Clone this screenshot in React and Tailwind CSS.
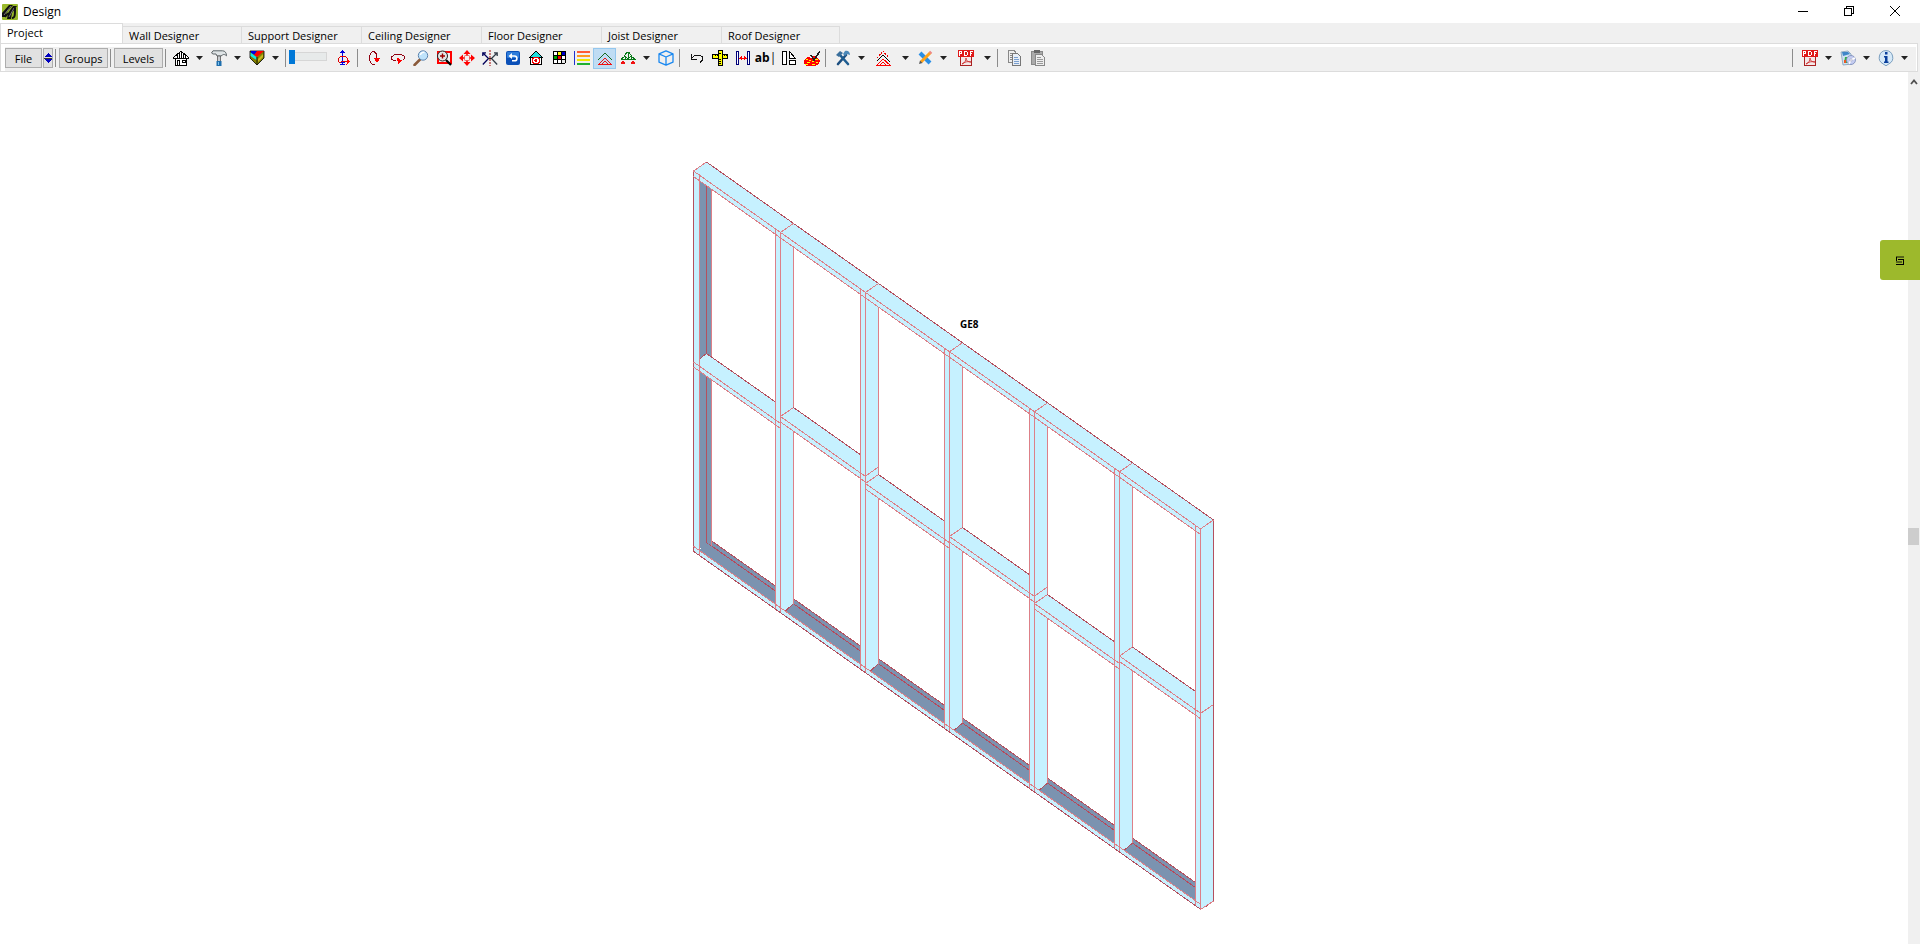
const TABS = [
    { name: 'Wall Designer', width: 'w-[119px]' },
    { name: 'Support Designer', width: 'w-[120px]' },
    { name: 'Ceiling Designer', width: 'w-[120px]' },
    { name: 'Floor Designer', width: 'w-[120px]' },
    { name: 'Joist Designer', width: 'w-[120px]' },
    { name: 'Roof Designer', width: 'w-[118px]' },
];

const Icon = ({ children, smooth }) => (
    <svg
        viewBox="0 0 16 16"
        className="w-4 h-4 shrink-0"
        fill="none"
        shapeRendering={smooth ? 'auto' : 'crispEdges'}
        aria-hidden="true"
    >
        {children}
    </svg>
);

const Logo = () => (
    <Icon smooth>
        <rect width="16" height="16" rx="1" fill="#9ab92c" />
        <path d="M0 13V9l7-8h4L4 9v4zM5 15l1-6 5-7h4l-5 7-1 6z" fill="#111" />
        <path d="M2 11l7-9M7 13l5-9" stroke="#777" />
        <path d="M10 14c3 0 3-3 3-10M3 13l3-4" stroke="#111" strokeWidth="2" />
    </Icon>
);

const HouseIcon = () => (
    <Icon>
        <path d="M3 7v8h11V7" fill="#fff" />
        <path d="M8 1l6 6H2z" fill="#fff" />
        <path d="M.5 7.500l7-6h1l7 6v1h-15zM2.500 8v7.500h11V8" stroke="#000" />
        <path d="M4.500 5v3M6.500 3v5M8.500 2v6M10.500 3v5M12.500 5v3" stroke="#000" />
        <path d="M4.500 15v-5h2v5M9.500 10.500h3v2h-3z" stroke="#000" />
    </Icon>
);

const HammerIcon = () => (
    <Icon smooth>
        <path d="M.5 3L2 .8h9.500c2.500 0 4 2 4 5C14 4.500 12.500 4 11.500 5L10 6H6L5 4H2z" fill="#dfe4e6" stroke="#5c6468" />
        <path d="M6.500 6h3v6h-3z" fill="#c8ccd0" stroke="#555" strokeWidth=".8" />
        <path d="M5.500 11h5v5h-5z" fill="#1e6fae" />
        <path d="M7 12h1v3H7z" fill="#7fc0ea" />
    </Icon>
);

const CubeIcon = () => (
    <Icon smooth>
        <path d="M1 1h14v7l-7 7-7-7z" fill="#808000" stroke="#000" strokeWidth=".8" />
        <path d="M2 1h6L6 5 2 3z" fill="#0000e0" />
        <path d="M8 1h7L8 7 5 5z" fill="#f00" />
        <path d="M1.500 2.500L7.500 7v3l-6-4z" fill="#10e8e8" />
        <path d="M14 4v3l-5 5V9z" fill="#c8b820" />
        <path d="M8 7v8" stroke="#000" strokeWidth=".8" />
    </Icon>
);

const OrbitIcon = () => (
    <Icon>
        <path d="M6.500 2v13M4 14.500h5M4 12.500h5" stroke="#0000e0" />
        <path d="M6.500 0L9 3H4z" fill="#0000e0" />
        <path d="M11.500 9.500V8.500L9.500 6.500h-5l-2 2v3l2 1.500" stroke="#e00000" />
        <path d="M5 11.500h7" stroke="#e00000" />
        <path d="M10.500 8.500l4 3-4 3z" fill="#f00" />
    </Icon>
);

const RotateVIcon = () => (
    <Icon>
        <path d="M9.500 8V4.500l-1-2-2-1h-1l-2 2-1 3v3l1 3 2 2h2" stroke="#900010" />
        <path d="M6.500 8h7L10 12.500z" fill="#f00" />
    </Icon>
);

const RotateHIcon = () => (
    <Icon>
        <path d="M6 10.500H4l-2.500-1.500V7l3-2.500h7L14.500 6.500V8.500l-2 2" stroke="#900010" />
        <path d="M7 7.500l5 3-4 4z" fill="#f00" />
    </Icon>
);

const MagnifierIcon = () => (
    <Icon smooth>
        <path d="M1.500 15L7 9.500" stroke="#8a5a3a" strokeWidth="2.500" strokeLinecap="round" />
        <circle cx="10" cy="5.500" r="4.700" fill="#bfe3fb" stroke="#5d83ad" />
        <path d="M7.500 5c0-2 2-3 4-2.500" stroke="#fff" strokeWidth="1.500" />
    </Icon>
);

const ZoomWindowIcon = () => (
    <Icon smooth>
        <rect x="2" y="2" width="13" height="11" stroke="#f00" strokeWidth="2" />
        <path d="M10 10l5 5" stroke="#000" strokeWidth="2.200" />
        <circle cx="6.500" cy="6" r="5" fill="#e4e4e4" stroke="#222" />
        <path d="M6.500 3.500v5M4 6h5" stroke="#900" strokeWidth="1.400" />
    </Icon>
);

const MoveIcon = () => (
    <Icon smooth>
        <path d="M8 0l3.500 4h-7zM8 16l3.500-4h-7zM0 8l4-3.500v7zM16 8l-4-3.500v7z" fill="#f00" />
        <path d="M8 3v10M3 8h10" stroke="#f00" strokeWidth="1.600" />
        <rect x="5.500" y="5.500" width="5" height="5" rx="1" fill="#f6f0f0" stroke="#e55" />
    </Icon>
);

const MirrorIcon = () => (
    <Icon smooth>
        <path d="M8 0v16" stroke="#a00000" strokeDasharray="2 1" />
        <path d="M1 3l5.500 5.500L.8 14.500M.8 6V2.800H4" stroke="#00005a" strokeWidth="1.300" />
        <path d="M15 3L9.500 8.500l5.700 6M15.200 6V2.800H12" stroke="#333c48" strokeWidth="1.300" />
        <path d="M6 8.500h4" stroke="#222" />
    </Icon>
);

const BackIcon = () => (
    <Icon smooth>
        <rect x="1" y="1" width="14" height="14" rx="2" fill="#0b50b8" />
        <rect x="2" y="2" width="12" height="6" rx="1" fill="#2f7ddb" />
        <path d="M5 6h4.500a2.300 2.300 0 010 4.800H7" stroke="#fff" strokeWidth="1.600" />
        <path d="M7 3L3.500 6 7 9z" fill="#fff" />
    </Icon>
);

const HomeTargetIcon = () => (
    <Icon>
        <path d="M2.500 8v6.500h11V8" fill="#fff" stroke="#000" />
        <path d="M7.500 1.500h1L14.500 7.500h-13z" fill="#20e0e0" stroke="#000" />
        <circle cx="8" cy="10.500" r="3.500" fill="#fff" stroke="#e00" />
        <circle cx="8" cy="10.500" r="1.500" fill="#e00" />
    </Icon>
);

const PaletteIcon = () => (
    <Icon>
        <path d="M2 1h13v12l-2 1H2z" fill="#000" />
        <path d="M3 2h3v3H3zM3 10h3v3H3z" fill="#fff" />
        <path d="M7 2h3v3H7z" fill="#ff0" />
        <path d="M11 2h3v3h-3z" fill="#00c" />
        <path d="M3 6h3v3H3z" fill="#0a0" />
        <path d="M7 6h3v3H7z" fill="#f00" />
        <path d="M11 6h3v3h-3zM7 10h3v3H7z" fill="#fff" />
        <path d="M11 10h3v3h-3z" fill="#e8e8e8" />
    </Icon>
);

const LayersIcon = () => (
    <Icon>
        <path d="M.5 1v14" stroke="#2030d0" />
        <path d="M3 2h13" stroke="#ff5a36" strokeWidth="2" />
        <path d="M3 6h13" stroke="#ff9a20" strokeWidth="2" />
        <path d="M3 10h13" stroke="#f0e800" strokeWidth="2" />
        <path d="M3 14h13" stroke="#20b030" strokeWidth="2" />
    </Icon>
);

const GableIcon = () => (
    <Icon>
        <path d="M1 10l7-7 7 7" stroke="#186a20" />
        <path d="M1.500 14.500L8 8l6.500 6.500zM5 14l3-3 3 3" stroke="#f01010" />
    </Icon>
);

const TrussIcon = () => (
    <Icon>
        <path d="M.5 9.500h15M1 9l3-2 3-5h2l3 5 3 2M5 6l3 3 3-3M5 6v3M11 6v3M8 2v7" stroke="#087a18" />
        <path d="M3 10l2.500 4H.5zM13 10l2.500 4h-5z" fill="#f01010" />
    </Icon>
);

const BoxIcon = () => (
    <Icon smooth>
        <path d="M8 .8l7 3v8.400l-7 3-7-3V3.800zM1 3.800L8 7l7-3.200M8 7v8" stroke="#1a88f0" strokeWidth="1.300" strokeLinejoin="round" />
    </Icon>
);

const UndoIcon = () => (
    <Icon>
        <path d="M2.500 4v5h5M3 8l3-3h5l2.500 2v3L11 12.500" stroke="#111" />
    </Icon>
);

const RulerIcon = () => (
    <Icon>
        <rect x=".5" y="4.500" width="15" height="4" fill="#ff0" stroke="#000" />
        <rect x="6.500" y=".5" width="4" height="15" fill="#ff0" stroke="#000" />
        <path d="M3.500 4v2M5.500 4v2M12.500 4v2M14.500 4v2M7 3.500h2M7 11.500h2M7 13.500h2M7 9.500h2" stroke="#000" />
    </Icon>
);

const SpanIcon = () => (
    <Icon>
        <path d="M1.500 1.500h2v13h-2zM12.500 1.500h2v13h-2z" fill="#fff" stroke="#00007a" />
        <path d="M4 8h8" stroke="#f00" />
        <path d="M4 8l3-2.500v5zM12 8L9 5.500v5z" fill="#f00" />
    </Icon>
);

const ShapesIcon = () => (
    <Icon>
        <path d="M1.500 1.500h4v13h-4z" stroke="#000" fill="#fff" />
        <path d="M8.500 1.500v7h6zM8.500 10.500h6v4h-6z" stroke="#000" fill="#fff" />
    </Icon>
);

const PaintIcon = () => (
    <Icon>
        <path d="M0 10l4-3 3 1 3-2 4 2 2 3-2 4-5 1H2l-2-3z" fill="#f00" />
        <path d="M2 9h2v1H2zM5 10h2v1H5zM3 12h3v1H3zM8 11h2v1H8zM8 14h3v1H8zM11 9h3v1h-3zM12 12h2v1h-2zM1 14h3v1H1z" fill="#ff0" />
        <path d="M7 5l3 5 6-9" stroke="#222" strokeWidth="1.500" />
    </Icon>
);

const ToolsIcon = () => (
    <Icon smooth>
        <path d="M3 14L11 5" stroke="#1d4f80" strokeWidth="2.600" strokeLinecap="round" />
        <path d="M10 1c3-1 5 1 5 4l-3-1-2 2-2-2z" fill="#4b88b8" />
        <path d="M5 5l8 9" stroke="#1d5c90" strokeWidth="2.600" strokeLinecap="round" />
        <path d="M1 5l4-4 3 2-4 4z" fill="#3a6f9c" />
    </Icon>
);

const RoofStackIcon = () => (
    <Icon>
        <path d="M1 8l6-7 6 7" stroke="#e00" strokeDasharray="2 1" />
        <path d="M1 11l6-6 7 7" stroke="#000" />
        <path d="M1 15l6-6 7 6zM4 15l3-3 3 3" stroke="#f00" />
    </Icon>
);

const PencilIcon = () => (
    <Icon smooth>
        <path d="M3 3l10 10" stroke="#2a8fe6" strokeWidth="4" />
        <path d="M13.500 2.500L4 12" stroke="#ffa31a" strokeWidth="3" />
        <path d="M2 14l1-3.500L5.500 13z" fill="#555" />
        <path d="M12.500 1.500l2 2" stroke="#e88" strokeWidth="2" />
    </Icon>
);

const PdfIcon = () => (
    <Icon>
        <path d="M2.500 5.500h11v10h-11z" fill="#f4e8e8" stroke="#a22" />
        <path d="M0 0h16v7H0z" fill="#e01818" />
        <path d="M1.500 6V1.500h2v2h-2M6.500 1.500h2l1 1v2l-1 1h-2zM12.500 6V1.500h2.500M12 3.500h2" stroke="#fff" />
        <path d="M4 14c3-1 4-4 4-6 0 3 2 4 5 4-4-1-6 0-9 2z" stroke="#c22" strokeWidth=".8" shapeRendering="auto" />
    </Icon>
);

const CopyIcon = () => (
    <Icon>
        <path d="M1.500.5h6l1 2v10h-7z" fill="#eee" stroke="#888" />
        <path d="M3 3.500h4M3 5.500h2M3 7.500h2M3 9.500h2" stroke="#888" />
        <path d="M5.500 3.500h5l3 3v9h-8z" fill="#e8eef6" stroke="#777" />
        <path d="M7 7.500h4M7 9.500h5M7 11.500h5M7 13.500h5" stroke="#7aa0d0" />
    </Icon>
);

const PasteIcon = () => (
    <Icon>
        <path d="M1.500 1.500h11v13h-11z" fill="#aaa" stroke="#888" />
        <path d="M4 0h6v3H4z" fill="#666" />
        <path d="M5.500 4.500h6l3 3v8h-9z" fill="#eee" stroke="#888" />
        <path d="M7 7.500h4M7 9.500h6M7 11.500h6M7 13.500h6" stroke="#999" />
    </Icon>
);

const MediaIcon = () => (
    <Icon smooth>
        <path d="M1 2l7-1 3 3 1 10-9 1z" fill="#cfe2f2" stroke="#7f9cb8" strokeWidth=".8" />
        <path d="M2 2h6l2 2-7 2z" fill="#3f86c8" />
        <path d="M5 7h2v6H4z" fill="#35b04a" />
        <path d="M4 10h2v3H4z" fill="#ea5a20" />
        <circle cx="11" cy="10" r="4.500" fill="#c4ccf0" stroke="#7a8ab8" strokeWidth=".8" />
        <path d="M11 10l4-2M11 10l-2 4" stroke="#fff" strokeWidth="1.500" />
        <circle cx="11" cy="10" r="1.200" fill="#fff" stroke="#88a" strokeWidth=".5" />
    </Icon>
);

const InfoIcon = () => (
    <Icon smooth>
        <path d="M8 .6a7 7 0 013 13.200L8 15.800 5 13.800A7 7 0 018 .6z" fill="#d6e9f8" stroke="#6d94b8" strokeWidth=".9" />
        <path d="M7 2h2.500v2.500H7zM6 6h3.500v5.500h1V13H6v-1.500h1V7.500H6z" fill="#0a3f9c" />
    </Icon>
);

const ToolButton = ({ label, active, wide, children }) => (
    <button
        type="button"
        aria-label={label}
        className={`h-[21px] shrink-0 flex items-center justify-center ${wide ? 'w-[29px]' : 'w-[23px]'} ${active ? 'bg-[#bfdcf3] outline outline-[#94c7ee] -outline-offset-1' : ''}`}
    >
        {children}
    </button>
);

const DropArrow = ({ label }) => (
    <button type="button" aria-label={`${label} options`} className="w-[15px] h-[21px] shrink-0 flex items-center justify-center">
        <svg viewBox="0 0 7 4" className="w-[7px] h-1" aria-hidden="true">
            <path d="M0 0h7L3.500 4z" fill="#222" />
        </svg>
    </button>
);

const TextButton = ({ children, className }) => (
    <button
        type="button"
        className={`h-5 shrink-0 border border-[#adadad] bg-[#e1e1e1] pt-px text-center ${className}`}
    >
        {children}
    </button>
);

const Separator = ({ tight }) => (
    <div className={`w-px h-[18px] shrink-0 bg-[#8c8c8c] ml-0.5 ${tight ? 'mr-[3px]' : 'mr-[5px]'}`} />
);

const Toolbar = () => (
    <div className="flex items-center bg-[#f0f0f0] h-6 pb-0.5 pr-1">
        <TextButton className="w-[37px]">File</TextButton>
        <button type="button" aria-label="Scroll files" className="ml-px w-2.5 h-5 shrink-0 border border-[#adadad] bg-[#e1e1e1] flex items-center justify-center">
            <svg viewBox="0 0 8 10" className="w-2 h-2.5 shrink-0" shapeRendering="crispEdges" aria-hidden="true">
                <path d="M4 0l4 4H0zM4 10l4-4H0z" fill="#0000c0" />
                <path d="M0 5h8" stroke="#333" />
            </svg>
        </button>
        <Separator tight />
        <TextButton className="w-[49px]">Groups</TextButton>
        <Separator tight />
        <TextButton className="w-[49px]">Levels</TextButton>
        <Separator tight />
        <ToolButton label="Building"><HouseIcon /></ToolButton>
        <DropArrow label="Building" />
        <ToolButton label="Build"><HammerIcon /></ToolButton>
        <DropArrow label="Build" />
        <ToolButton label="Solid view"><CubeIcon /></ToolButton>
        <DropArrow label="Solid view" />
        <Separator tight />
        <input
            type="range"
            aria-label="Transparency"
            defaultValue={0}
            className="appearance-none w-[38px] h-[14px] shrink-0 mb-1 mr-[5px] bg-transparent [&::-webkit-slider-runnable-track]:h-[9px] [&::-webkit-slider-runnable-track]:border [&::-webkit-slider-runnable-track]:border-[#d6d6d6] [&::-webkit-slider-runnable-track]:bg-[#e7eaea] [&::-webkit-slider-thumb]:appearance-none [&::-webkit-slider-thumb]:w-1.5 [&::-webkit-slider-thumb]:h-[14px] [&::-webkit-slider-thumb]:-mt-[3px] [&::-webkit-slider-thumb]:-ml-px [&::-webkit-slider-thumb]:bg-[#0078d7]"
        />
        <ToolButton label="Orbit"><OrbitIcon /></ToolButton>
        <Separator />
        <ToolButton label="Rotate vertical"><RotateVIcon /></ToolButton>
        <ToolButton label="Rotate horizontal"><RotateHIcon /></ToolButton>
        <ToolButton label="Zoom"><MagnifierIcon /></ToolButton>
        <ToolButton label="Zoom window"><ZoomWindowIcon /></ToolButton>
        <ToolButton label="Pan"><MoveIcon /></ToolButton>
        <ToolButton label="Mirror"><MirrorIcon /></ToolButton>
        <ToolButton label="Previous view"><BackIcon /></ToolButton>
        <ToolButton label="Home view"><HomeTargetIcon /></ToolButton>
        <ToolButton label="Colours"><PaletteIcon /></ToolButton>
        <ToolButton label="Layers"><LayersIcon /></ToolButton>
        <ToolButton label="Frames" active><GableIcon /></ToolButton>
        <ToolButton label="Trusses"><TrussIcon /></ToolButton>
        <DropArrow label="Trusses" />
        <ToolButton label="3D view"><BoxIcon /></ToolButton>
        <Separator />
        <ToolButton label="Undo"><UndoIcon /></ToolButton>
        <ToolButton label="Measure"><RulerIcon /></ToolButton>
        <ToolButton label="Dimension"><SpanIcon /></ToolButton>
        <button type="button" className="w-[23px] h-[21px] shrink-0 text-[12px] font-bold whitespace-nowrap">
            ab<span className="font-normal">|</span>
        </button>
        <ToolButton label="Shapes"><ShapesIcon /></ToolButton>
        <ToolButton label="Paint"><PaintIcon /></ToolButton>
        <Separator />
        <ToolButton label="Tools"><ToolsIcon /></ToolButton>
        <DropArrow label="Tools" />
        <ToolButton label="Roof" wide><RoofStackIcon /></ToolButton>
        <DropArrow label="Roof" />
        <ToolButton label="Edit"><PencilIcon /></ToolButton>
        <DropArrow label="Edit" />
        <ToolButton label="Export PDF" wide><PdfIcon /></ToolButton>
        <DropArrow label="Export PDF" />
        <Separator />
        <ToolButton label="Copy"><CopyIcon /></ToolButton>
        <ToolButton label="Paste"><PasteIcon /></ToolButton>

        <div className="flex items-center ml-auto">
            <Separator />
            <ToolButton label="PDF"><PdfIcon /></ToolButton>
            <DropArrow label="PDF" />
            <ToolButton label="Media"><MediaIcon /></ToolButton>
            <DropArrow label="Media" />
            <ToolButton label="Info"><InfoIcon /></ToolButton>
            <DropArrow label="Info" />
        </div>
    </div>
);

// Frame geometry: every long member falls by SLOPE, depth goes up and right
const SLOPE = 0.706;
const DX = 13;
const DY = -9;
const T = 5;
const LEFT = 693.5;
const RIGHT = 1200.5;
const STUDS = [775.5, 860.5, 944.5, 1029.5, 1114.5, 1195.5];
const NOGS = [
    { x: 780.5, y: 416.5, end: 860.5 },
    { x: 865.5, y: 483.5, end: 944.5, step: true },
    { x: 949.5, y: 536.5, end: 1029.5 },
    { x: 1034.5, y: 603.5, end: 1114.5, step: true },
    { x: 1119.5, y: 656, end: 1195.5 },
];
const FILL = '#c6f1ff';
const SHADE = '#7b93b0';

const topY = (x) => 171 + SLOPE * (x - LEFT);
const baseY = (x) => 546.3 + SLOPE * (x - LEFT);
const pts = (list) => list.map((p) => p.join(',')).join(' ');

const Line = ({ from, to, dark }) => (
    <line x1={from[0]} y1={from[1]} x2={to[0]} y2={to[1]} stroke={dark ? '#b4505f' : '#dd8088'} />
);

const Nog = ({ x, y, end, step }) => {
    const at = (px) => y + SLOPE * (px - x);
    const backEnd = y + DY + SLOPE * (end - x - DX);
    return (
        <g>
            <polygon
                points={pts([[x, y], [x + DX, y + DY], [end, backEnd], [end, at(end) + T + 1], [x, y + T + 1]])}
                fill={FILL}
            />
            <Line from={[x, y]} to={[x + DX, y + DY]} />
            {step && <Line from={[x, y - 7.5]} to={[x + DX, y - 7.5 + DY]} />}
            <Line from={[x + DX, y + DY]} to={[end, backEnd]} dark />
            <Line from={[x, y]} to={[end + T, at(end + T)]} />
            <Line from={[x, y + T + 0.5]} to={[end + T, at(end + T) + T + 0.5]} />
        </g>
    );
};

const StudEdges = ({ x }) => (
    <g>
        <Line from={[x, topY(x)]} to={[x, baseY(x) + T]} />
        <Line from={[x + T, topY(x + T)]} to={[x + T, baseY(x + T) + T]} />
    </g>
);

const Stud = ({ x }) => {
    const f = x + T;
    const b = f + DX;
    return (
        <g>
            <polygon
                points={pts([[x, topY(x)], [f, topY(f)], [b, topY(b)], [b, baseY(f) - 4], [f + 5, baseY(f) + 3], [f, baseY(f) + T], [x, baseY(x) + T]])}
                fill={FILL}
            />
            <Line from={[b, topY(b)]} to={[b, baseY(f) - 4]} />
            <Line from={[b, baseY(f) - 4]} to={[f + 5, baseY(f) + 3]} dark />
        </g>
    );
};

const FrameDrawing = () => {
    const inner = LEFT + 6;
    const side = inner + DX - 1;
    const end = RIGHT + DX;
    const nogY = (x) => 362 + SLOPE * (x - LEFT);
    const backBase = (x) => baseY(x) + DY - SLOPE * DX;
    return (
        <svg viewBox="0 72 1908 872" className="block w-full h-full" shapeRendering="crispEdges" role="img" aria-label="GE8">
            {/* Bottom plate */}
            <polygon
                points={pts([[inner, baseY(inner)], [706.5, backBase(706.5)], [RIGHT, backBase(RIGHT)], [RIGHT, baseY(RIGHT)]])}
                fill={SHADE}
            />
            <Line from={[706.5, backBase(706.5)]} to={[RIGHT, backBase(RIGHT)]} dark />
            <line x1="706.5" y1={backBase(706.5) + T} x2={RIGHT} y2={backBase(RIGHT) + T} stroke="#b8485a" />
            <polygon
                points={pts([[LEFT, baseY(LEFT)], [RIGHT, baseY(RIGHT)], [RIGHT, baseY(RIGHT) + T], [LEFT, baseY(LEFT) + T]])}
                fill={FILL}
            />

            {/* Left stud */}
            <polygon
                points={pts([[inner, topY(inner)], [side, topY(side)], [side, backBase(side) + T], [706.5, backBase(706.5) + T], [inner, baseY(inner) - 2]])}
                fill={SHADE}
            />
            <Line from={[706.5, topY(706.5)]} to={[706.5, backBase(706.5) + T]} dark />
            <Line from={[side, topY(side)]} to={[side, backBase(side) + T]} />
            <polygon points={pts([[LEFT, topY(LEFT)], [inner, topY(inner)], [inner, baseY(inner) + T], [LEFT, baseY(LEFT) + T]])} fill={FILL} />

            {/* First nog meets the left stud front face */}
            <polygon
                points={pts([[LEFT, nogY(LEFT)], [inner, 359], [706.5, 353.5], [775.5, 402], [775.5, nogY(775.5) + T], [LEFT, nogY(LEFT) + T]])}
                fill={FILL}
            />
            <Line from={[inner, 359]} to={[706.5, 353.5]} dark />
            <Line from={[706.5, 353.5]} to={[775.5, 402]} dark />
            <Line from={[LEFT, topY(LEFT)]} to={[LEFT, baseY(LEFT) + T]} dark />
            <Line from={[inner, topY(inner)]} to={[inner, baseY(inner) + T]} />

            {STUDS.map((x) => <Stud key={x} x={x} />)}
            <Line from={[LEFT, nogY(LEFT)]} to={[780.5, nogY(780.5)]} />
            <Line from={[LEFT, nogY(LEFT) + T]} to={[780.5, nogY(780.5) + T]} />
            {NOGS.map((nog) => <Nog key={nog.x} {...nog} />)}
            {STUDS.map((x) => <StudEdges key={x} x={x} />)}
            <Line from={[LEFT, baseY(LEFT)]} to={[RIGHT, baseY(RIGHT)]} />
            <Line from={[LEFT, baseY(LEFT) + T]} to={[RIGHT, baseY(RIGHT) + T]} dark />

            {/* Right end face */}
            <polygon
                points={pts([[RIGHT, topY(RIGHT)], [end, topY(RIGHT) + DY], [end, 901], [RIGHT, 909]])}
                fill={FILL}
            />
            <Line from={[RIGHT, topY(RIGHT)]} to={[RIGHT, 909.5]} />
            <Line from={[end, topY(RIGHT) + DY]} to={[end, 901]} dark />
            <Line from={[RIGHT, 909.5]} to={[end, 901]} />
            <Line from={[RIGHT, 713.5]} to={[end, 704.5]} />

            {/* Top plate */}
            <polygon
                points={pts([[LEFT, topY(LEFT)], [LEFT + DX, topY(LEFT) + DY], [end, topY(RIGHT) + DY], [RIGHT, topY(RIGHT)], [RIGHT, topY(RIGHT) + T], [LEFT, topY(LEFT) + T]])}
                fill={FILL}
            />
            <Line from={[LEFT, topY(LEFT)]} to={[LEFT + DX, topY(LEFT) + DY]} />
            <Line from={[LEFT + DX, topY(LEFT) + DY]} to={[end, topY(RIGHT) + DY]} dark />
            <Line from={[LEFT, topY(LEFT)]} to={[RIGHT, topY(RIGHT)]} />
            <Line from={[LEFT, topY(LEFT) + T + 0.5]} to={[RIGHT, topY(RIGHT) + T + 0.5]} />
            <Line from={[RIGHT, topY(RIGHT)]} to={[end, topY(RIGHT) + DY]} />
            <Line from={[RIGHT, topY(RIGHT)]} to={[RIGHT, topY(RIGHT) + T]} />
            <Line from={[inner, topY(inner) - 1]} to={[inner, topY(inner) + T]} />
            {STUDS.map((x) => (
                <g key={x}>
                    <Line from={[x, topY(x)]} to={[x, topY(x) + T]} />
                    <Line from={[x + T, topY(x + T)]} to={[x + T, topY(x + T) + T]} />
                    {x + T < RIGHT && (
                        <Line from={[x + T, topY(x + T)]} to={[x + T + DX, topY(x + T) + DY]} />
                    )}
                </g>
            ))}

            <text x="960" y="328" className="text-[10px] font-bold" fill="#000">GE8</text>
        </svg>
    );
};

const App = () => {
    return (
        <div className="h-screen flex flex-col overflow-hidden bg-white text-black text-[11px] leading-[14px] font-['Open_Sans','Noto_Sans',sans-serif]">
            {/* Title bar */}
            <header className="h-[23px] shrink-0 flex items-center pl-0.5 pr-0.5">
                <Logo />
                <h1 className="ml-[5px] text-[12px]">Design</h1>
                <div className="ml-auto flex pb-0.5">
                    <button type="button" aria-label="Minimize" className="w-[46px] h-5 flex items-center justify-center">
                        <svg viewBox="0 0 10 10" className="w-2.5 h-2.5" shapeRendering="crispEdges"><path d="M0 5.500h10" stroke="#000" /></svg>
                    </button>
                    <button type="button" aria-label="Restore" className="w-[46px] h-5 flex items-center justify-center">
                        <svg viewBox="0 0 10 10" className="w-2.5 h-2.5" fill="none" shapeRendering="crispEdges"><path d="M.5 2.500h7v7h-7zM2.500 2V.5h7v7H8" stroke="#000" /></svg>
                    </button>
                    <button type="button" aria-label="Close" className="w-[46px] h-5 flex items-center justify-center">
                        <svg viewBox="0 0 10 10" className="w-2.5 h-2.5"><path d="M0 0l10 10M10 0L0 10" stroke="#000" /></svg>
                    </button>
                </div>
            </header>

            {/* Tabs */}
            <nav className="h-5 shrink-0 flex items-end bg-[#f0f0f0]">
                <button type="button" className="w-[123px] h-5 bg-white border-t border-x border-[#dcdcdc] text-left pl-1.5 pb-px">Project</button>
                {TABS.map((tab) => (
                    <button key={tab.name} type="button" className={`${tab.width} h-[17px] border-t border-r border-[#dcdcdc] text-left pl-1.5 pt-px whitespace-nowrap`}>
                        {tab.name}
                    </button>
                ))}
            </nav>

            <div className="shrink-0 bg-[#f0f0f0] pr-0.5">
                <div className="bg-white border border-[#dcdcdc] pl-1 pt-[3px] pr-px">
                    <Toolbar />
                </div>
            </div>

            {/* Viewport */}
            <main className="relative flex-1 min-h-0 flex">
                <div className="flex-1 min-w-0">
                    <FrameDrawing />
                </div>
                <div className="w-3 shrink-0 flex flex-col bg-[#f0f0f0] pr-px">
                    <button type="button" aria-label="Scroll up" className="h-5 shrink-0 flex items-center justify-center">
                        <svg viewBox="0 0 8 6" className="w-2 h-1.5" fill="none"><path d="M1 5l3-3.500L7 5" stroke="#505050" strokeWidth="1.800" /></svg>
                    </button>
                    <div className="grow-[436]" />
                    <div className="h-[17px] shrink-0 bg-[#cdcdcd]" />
                    <div className="grow-[399]" />
                </div>
                <button type="button" aria-label="Side panel" className="absolute right-0 top-[168px] w-10 h-10 rounded-l-[3px] bg-[#9db92c] flex items-center justify-center">
                    <svg viewBox="0 0 8 9" className="w-2 h-[9px]" fill="none" shapeRendering="crispEdges">
                        <path d="M0 1h8" stroke="#55651a" strokeWidth="2" />
                        <path d="M.5 1v5M0 8.500h8M7.500 3v6M2 3.500h6" stroke="#000" />
                        <path d="M0 6h6" stroke="#55651a" strokeWidth="2" />
                    </svg>
                </button>
            </main>
        </div>
    );
};

export default App;
